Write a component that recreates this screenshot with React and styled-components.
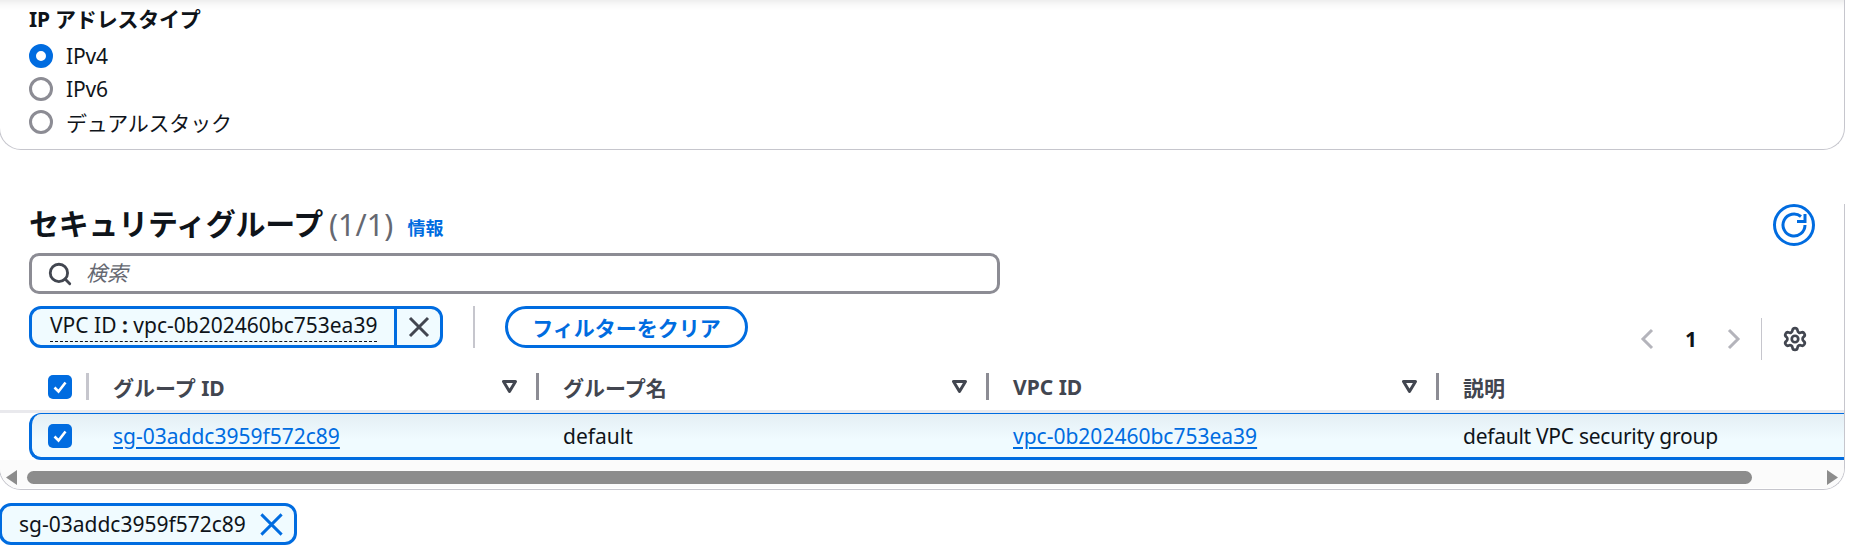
import React from "react";
import styled, { createGlobalStyle } from "styled-components";
import { Search, Settings } from "lucide-react";

const Global = createGlobalStyle`
  html, body { margin: 0; padding: 0; background: #fff; overflow: hidden; }
  body { font-family: "Noto Sans", "Noto Sans CJK JP", sans-serif; font-size: 21px; color: #0f141a; }
  * { box-sizing: border-box; }
`;

const Page = styled.div`
  width: 1860px;
  height: 557px;
  padding-right: 14px;
  display: flex;
  flex-direction: column;
  margin-left: -1px;
`;

const IpCard = styled.section`
  height: 150px;
  border: 1px solid #c6c6cd;
  border-top: none;
  border-radius: 0 0 22px 22px;
  box-shadow: inset 0 12px 10px -10px rgba(0, 0, 0, 0.1);
  padding: 5px 0 0 29px;
`;

const FieldLabel = styled.div`
  font-weight: 700;
  line-height: 29px;
  margin-bottom: 5px;
  letter-spacing: -0.2px;
`;

const RadioRow = styled.div`
  display: flex;
  align-items: center;
  height: 33px;
  gap: 13px;
`;

const RadioLabel = styled.span`
  letter-spacing: -0.2px;
`;

const Radio = styled.span`
  width: 24px;
  height: 24px;
  border-radius: 50%;
  background: #fff;
  border: ${(p) => (p.$on ? "7px solid #006ce0" : "3px solid #8c8c94")};
`;

const GroupCard = styled.section`
  margin-top: 54px;
  height: 286px;
  border-right: 1px solid #c6c6cd;
  border-bottom: 1px solid #c6c6cd;
  border-left: 1px solid #c6c6cd;
  border-radius: 0 0 22px 22px;
  overflow: hidden;
`;

const TitleRow = styled.div`
  display: flex;
  align-items: center;
  height: 42px;
  padding: 0 29px 0 29px;
`;

const Title = styled.h2`
  margin: 0 0 2px;
  font-size: 30px;
  line-height: 42px;
  font-weight: 700;
  letter-spacing: -0.25px;
`;

const Count = styled.span`
  font-size: 30px;
  color: #656871;
  margin: 0 0 2px 6px;
  letter-spacing: 0.2px;
`;

const InfoLink = styled.a`
  font-size: 18px;
  font-weight: 700;
  color: #006ce0;
  margin-left: 14px;
  margin-top: 3px;
`;

const RefreshButton = styled.span`
  margin-left: auto;
  width: 42px;
  height: 42px;
  border: 3px solid #006ce0;
  border-radius: 50%;
  display: flex;
  align-items: center;
  justify-content: center;
  color: #006ce0;
`;

const SearchBox = styled.div`
  margin: 7px 0 0 29px;
  width: 971px;
  height: 41px;
  border: 3px solid #8c8c94;
  border-radius: 10px;
  display: flex;
  align-items: center;
  gap: 13px;
  padding-left: 15px;
  color: #424650;
`;

const Placeholder = styled.span`
  font-style: italic;
  color: #656871;
  margin-bottom: 4px;
`;

const FilterRow = styled.div`
  margin-top: 12px;
  height: 42px;
  display: flex;
  align-items: center;
  padding: 0 29px 0 29px;
`;

const FilterChip = styled.div`
  display: flex;
  height: 42px;
  width: 414px;
  border: 3px solid #006ce0;
  border-radius: 12px;
  background: #f0fbff;
  overflow: hidden;
`;

const ChipText = styled.div`
  flex: 1;
  padding-left: 18px;
  white-space: nowrap;
  & > span {
    border-bottom: 1px dashed #0f141a;
    display: inline-block;
    line-height: 32px;
  }
`;

const ChipClose = styled.div`
  width: 46px;
  border-left: 3px solid #006ce0;
  display: flex;
  align-items: center;
  justify-content: center;
  color: #424650;
`;

const VDivider = styled.span`
  width: 2px;
  height: 42px;
  background: #c6c6cd;
  margin: 0 30px;
`;

const ClearButton = styled.button`
  width: 243px;
  height: 42px;
  border: 3px solid #006ce0;
  border-radius: 21px;
  background: #fff;
  color: #006ce0;
  font: 700 21px "Noto Sans", "Noto Sans CJK JP", sans-serif;
  padding: 0;
`;

const Pager = styled.div`
  margin-left: auto;
  display: flex;
  align-items: center;
  height: 42px;
  margin-top: 24px;
  margin-right: 7px;
`;

const PageNum = styled.span`
  font-weight: 700;
  margin: 0 30px 0 31px;
`;

const PagerDivider = styled.span`
  width: 1px;
  height: 42px;
  background: #c6c6cd;
  margin: 0 20px;
`;

const Columns = "450px 450px 450px 1fr";

const HeaderGrid = styled.div`
  display: grid;
  grid-template-columns: 88px ${Columns};
  margin-top: 21px;
  padding-top: 4px;
  height: 44px;
  align-items: start;
  border-bottom: 3px solid #e9e9ed;
`;

const SelectCell = styled.div`
  display: flex;
  align-items: center;
  height: 27px;
  padding-left: 48px;
  position: relative;
`;

const HeadCell = styled.div`
  display: flex;
  align-items: center;
  height: 27px;
  padding-left: 25px;
  font-weight: 700;
  color: #424650;
`;

const SortIcon = styled.svg`
  margin-left: auto;
  margin-right: 19px;
  width: 15px;
  height: 15px;
`;

const ColSep = styled.span`
  width: 3px;
  height: 27px;
  background: #8c8c94;
  flex: none;
  margin-right: -1px;
`;

const SelectSep = styled(ColSep)`
  position: absolute;
  right: 0;
  background: #c6c6cd;
`;

const Checkbox = styled.span`
  width: 24px;
  height: 24px;
  border-radius: 5px;
  background: #006ce0;
  display: flex;
  align-items: center;
  justify-content: center;
`;

const DataRow = styled.div`
  display: grid;
  grid-template-columns: 56px ${Columns};
  margin-left: 29px;
  height: 47px;
  align-items: center;
  border: 1px solid #006ce0;
  border-left-width: 3px;
  border-bottom-width: 3px;
  border-right: none;
  border-radius: 12px 0 0 12px;
  background: linear-gradient(#e4eef4, #f0fbff 60%);
`;

const RowCheckCell = styled.div`
  padding-left: 16px;
  display: flex;
`;

const BodyCell = styled.div`
  padding-left: 25px;
  white-space: nowrap;
  letter-spacing: ${(p) => (p.$tight ? "-0.27px" : "0")};
`;

const CellLink = styled.a`
  color: #006ce0;
  text-decoration: underline;
  text-underline-offset: 3px;
`;

const ScrollTrack = styled.div`
  height: 28px;
  background: #fbfbfb;
  display: flex;
  align-items: center;
  padding: 7px 6px 0;
`;

const ScrollThumb = styled.div`
  height: 13px;
  width: 1725px;
  margin-left: 10px;
  border-radius: 7px;
  background: #8c8c8c;
`;

const ScrollArrow = styled.svg`
  width: 11px;
  height: 15px;
  fill: #8c8c8c;
  margin-left: ${(p) => (p.$end ? "auto" : "0")};
`;

const TokenRow = styled.div`
  margin-top: 13px;
`;

const Token = styled.div`
  display: inline-flex;
  align-items: center;
  height: 42px;
  width: 298px;
  border: 3px solid #006ce0;
  border-radius: 12px;
  background: #f0fbff;
  padding-left: 17px;
  gap: 12px;
`;

const Check = () => (
  <svg width="16" height="16" viewBox="0 0 16 16" fill="none" stroke="#fff" strokeWidth="2.6">
    <path d="M2.5 8.5 6.5 12.5 13.5 3.5" />
  </svg>
);

const Cross = ({ size = 24, color = "currentColor", w = 3 }) => (
  <svg width={size} height={size} viewBox="0 0 24 24" fill="none" stroke={color} strokeWidth={w}>
    <path d="M3 3 21 21M21 3 3 21" />
  </svg>
);

const Sort = () => (
  <SortIcon viewBox="0 0 15 15" fill="none" stroke="#424650" strokeWidth="3">
    <path d="M1.5 2.5h12L7.5 12.5z" strokeLinejoin="round" />
  </SortIcon>
);

const Chevron = ({ dir }) => (
  <svg width="14" height="22" viewBox="0 0 14 22" fill="none" stroke="#b4b4bb" strokeWidth="3">
    <path d={dir === "left" ? "M12 2 3 11 12 20" : "M2 2 11 11 2 20"} />
  </svg>
);

const Head = ({ children }) => (
  <HeadCell>
    {children}
    <Sort />
    <ColSep />
  </HeadCell>
);

export default function App() {
  return (
    <Page>
      <Global />
      <IpCard>
        <FieldLabel>IP アドレスタイプ</FieldLabel>
        <RadioRow><Radio $on /><RadioLabel>IPv4</RadioLabel></RadioRow>
        <RadioRow><Radio /><RadioLabel>IPv6</RadioLabel></RadioRow>
        <RadioRow><Radio /><RadioLabel>デュアルスタック</RadioLabel></RadioRow>
      </IpCard>

      <GroupCard>
        <TitleRow>
          <Title>セキュリティグループ</Title>
          <Count>(1/1)</Count>
          <InfoLink>情報</InfoLink>
          <RefreshButton>
            <svg width="26" height="26" viewBox="0 0 26 26" fill="none" stroke="currentColor" strokeWidth="3">
              <path d="M24 13A11 11 0 1 1 20 4.5" />
              <path d="M24 2v7.5h-8" />
            </svg>
          </RefreshButton>
        </TitleRow>

        <SearchBox>
          <Search size={26} strokeWidth={2.6} />
          <Placeholder>検索</Placeholder>
        </SearchBox>

        <FilterRow>
          <FilterChip>
            <ChipText><span>VPC ID <b>:</b> vpc-0b202460bc753ea39</span></ChipText>
            <ChipClose><Cross size={24} /></ChipClose>
          </FilterChip>
          <VDivider />
          <ClearButton>フィルターをクリア</ClearButton>
          <Pager>
            <Chevron dir="left" />
            <PageNum>1</PageNum>
            <Chevron dir="right" />
            <PagerDivider />
            <Settings size={26} color="#424650" strokeWidth={2.5} />
          </Pager>
        </FilterRow>

        <HeaderGrid>
          <SelectCell>
            <Checkbox><Check /></Checkbox>
            <SelectSep />
          </SelectCell>
          <Head>グループ ID</Head>
          <Head>グループ名</Head>
          <Head>VPC ID</Head>
          <HeadCell>説明</HeadCell>
        </HeaderGrid>

        <DataRow>
          <RowCheckCell><Checkbox><Check /></Checkbox></RowCheckCell>
          <BodyCell><CellLink>sg-03addc3959f572c89</CellLink></BodyCell>
          <BodyCell>default</BodyCell>
          <BodyCell><CellLink>vpc-0b202460bc753ea39</CellLink></BodyCell>
          <BodyCell $tight>default VPC security group</BodyCell>
        </DataRow>

        <ScrollTrack>
          <ScrollArrow viewBox="0 0 11 15"><path d="M11 0v15L0 7.5z" /></ScrollArrow>
          <ScrollThumb />
          <ScrollArrow $end viewBox="0 0 11 15"><path d="M0 0v15l11-7.5z" /></ScrollArrow>
        </ScrollTrack>
      </GroupCard>

      <TokenRow>
        <Token>
          sg-03addc3959f572c89
          <Cross size={27} color="#006ce0" w={2.6} />
        </Token>
      </TokenRow>
    </Page>
  );
}
